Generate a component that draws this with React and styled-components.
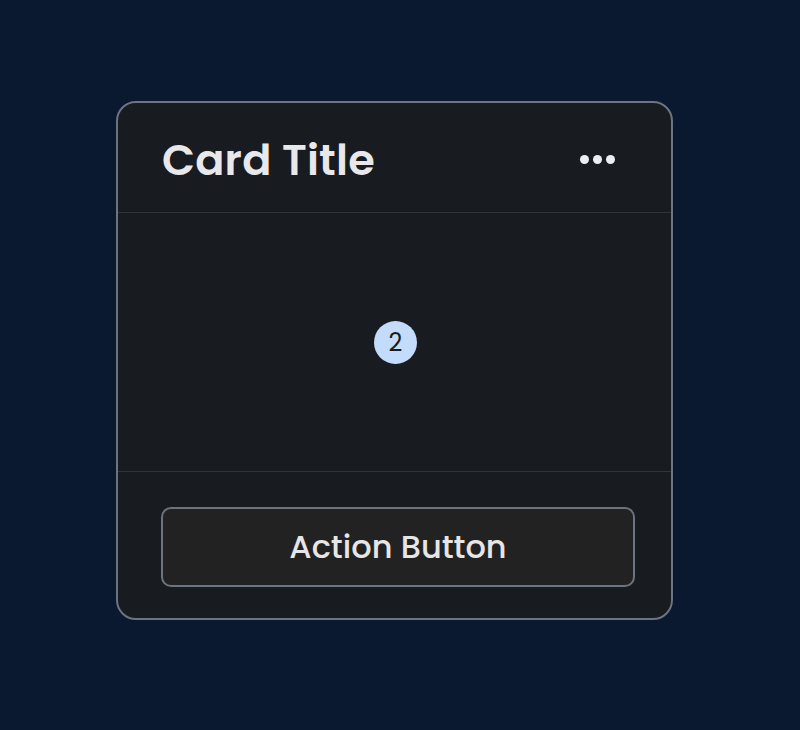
import React from 'react';
import styled, { createGlobalStyle } from 'styled-components';

const GlobalStyle = createGlobalStyle`
  html, body {
    margin: 0;
    padding: 0;
    background: #0a1830;
  }
  body {
    font-family: Poppins, Inter, "Noto Sans", sans-serif;
  }
`;

const Page = styled.div`
  width: 800px;
  height: 730px;
  box-sizing: border-box;
  padding: 101px 0 0 116px;
  background: #0a1830;
`;

const Card = styled.div`
  width: 557px;
  height: 519px;
  box-sizing: border-box;
  border: 2px solid #6b7480;
  border-radius: 20px;
  background: #181b20;
  display: flex;
  flex-direction: column;
  overflow: hidden;
`;

const Header = styled.div`
  height: 110px;
  box-sizing: border-box;
  display: flex;
  align-items: center;
  justify-content: space-between;
  padding: 4px 56px 0 44px;
  border-bottom: 1px solid #30343b;
`;

const Title = styled.h2`
  margin: 0;
  font-size: 43px;
  font-weight: 600;
  color: #e8e8ea;
  letter-spacing: 0.2px;
`;

const MenuButton = styled.button`
  display: flex;
  gap: 4px;
  padding: 0;
  background: none;
  border: none;
  cursor: pointer;
`;

const Dot = styled.span`
  width: 9px;
  height: 9px;
  border-radius: 50%;
  background: #eceef0;
`;

const Body = styled.div`
  height: 258px;
  display: flex;
  align-items: center;
  justify-content: center;
  border-bottom: 1px solid #30343b;
`;

const Badge = styled.span`
  width: 43px;
  height: 43px;
  border-radius: 50%;
  background: #c3dcfb;
  color: #181b21;
  display: flex;
  align-items: center;
  justify-content: center;
  font-size: 24px;
  font-weight: 400;
  margin-left: 2px;
`;

const Footer = styled.div`
  flex: 1;
  display: flex;
  align-items: center;
  padding: 3px 36px 0 43px;
`;

const ActionButton = styled.button`
  width: 100%;
  height: 80px;
  border: 2px solid #6b7480;
  border-radius: 10px;
  background: #222222;
  color: #e6e6e6;
  font-family: inherit;
  font-size: 32px;
  font-weight: 500;
  cursor: pointer;
`;

const App = () => (
  <Page>
    <GlobalStyle />
    <Card>
      <Header>
        <Title>Card Title</Title>
        <MenuButton aria-label="More options">
          <Dot />
          <Dot />
          <Dot />
        </MenuButton>
      </Header>
      <Body>
        <Badge>2</Badge>
      </Body>
      <Footer>
        <ActionButton>Action Button</ActionButton>
      </Footer>
    </Card>
  </Page>
);

export default App;
